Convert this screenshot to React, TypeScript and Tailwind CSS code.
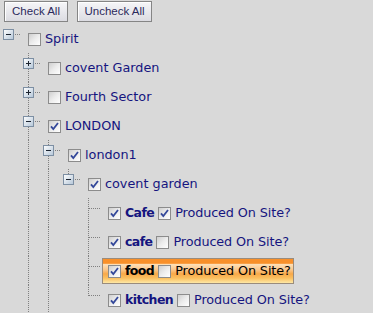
import React from 'react';

type Cell = ' ' | 'I' | 'T' | 'L' | 'R';

type TreeRow = {
  label: string;
  cells: Cell[];
  expander?: 'plus' | 'minus';
  checked: boolean;
  bold?: boolean;
  produced?: boolean; // undefined = no second checkbox
  selected?: boolean;
};

const rows: TreeRow[] = [
  { label: 'Spirit', cells: ['R'], expander: 'minus', checked: false },
  { label: 'covent Garden', cells: [' ', 'T'], expander: 'plus', checked: false },
  { label: 'Fourth Sector', cells: [' ', 'T'], expander: 'plus', checked: false },
  { label: 'LONDON', cells: [' ', 'T'], expander: 'minus', checked: true },
  { label: 'london1', cells: [' ', 'I', 'T'], expander: 'minus', checked: true },
  { label: 'covent garden', cells: [' ', 'I', 'I', 'L'], expander: 'minus', checked: true },
  { label: 'Cafe', cells: [' ', 'I', 'I', ' ', 'T'], checked: true, bold: true, produced: true },
  { label: 'cafe', cells: [' ', 'I', 'I', ' ', 'T'], checked: true, bold: true, produced: false },
  { label: 'food', cells: [' ', 'I', 'I', ' ', 'T'], checked: true, bold: true, produced: false, selected: true },
  { label: 'kitchen', cells: [' ', 'I', 'I', ' ', 'L'], checked: true, bold: true, produced: false },
];

// one 20px indent column of the tree, with its dotted connector lines
function ElbowCell({ type, expander }: { type: Cell; expander?: 'plus' | 'minus' }) {
  const dot = { stroke: '#808080', strokeWidth: 1, strokeDasharray: '1 1', shapeRendering: 'crispEdges' as const };
  return (
    <svg width="20" height="29" className="shrink-0 block">
      <defs>
        <linearGradient id="exp" x1="0" y1="0" x2="1" y2="1">
          <stop offset="0" stopColor="#ffffff" />
          <stop offset="1" stopColor="#b4c6d8" />
        </linearGradient>
      </defs>
      {(type === 'I' || type === 'T') && <line x1="8.5" y1="0" x2="8.5" y2="29" {...dot} />}
      {type === 'L' && <line x1="8.5" y1="0" x2="8.5" y2="11" {...dot} />}
      {(type === 'T' || type === 'L' || type === 'R') && <line x1="9" y1="10.5" x2="20" y2="10.5" {...dot} />}
      {expander && (
        <g shapeRendering="crispEdges">
          <rect x="3.5" y="5.5" width="10" height="10" fill="url(#exp)" stroke="#7d8fa3" />
          <line x1="6" y1="10.5" x2="11" y2="10.5" stroke="#1c2430" />
          {expander === 'plus' && <line x1="8.5" y1="8" x2="8.5" y2="13" stroke="#1c2430" />}
        </g>
      )}
    </svg>
  );
}

function Box({ checked }: { checked: boolean }) {
  return (
    <span className="shrink-0 w-[13px] h-[13px] border border-[#8c8c8c] bg-gradient-to-br from-[#cfcfcf] via-[#ececec] to-[#ffffff] flex items-center justify-center">
      {checked && (
        <svg width="9" height="9" viewBox="0 0 9 9">
          <path d="M1 4.3 L3.3 7 L8 1" fill="none" stroke="#34489a" strokeWidth="1.8" />
        </svg>
      )}
    </span>
  );
}

function Row({ row }: { row: TreeRow }) {
  const textColor = row.selected ? 'text-black' : 'text-[#15157f]';
  return (
    <div className="flex h-[29px]">
      {row.cells.map((c, i) => (
        <ElbowCell key={i} type={c} expander={i === row.cells.length - 1 ? row.expander : undefined} />
      ))}
      <div
        className={`ml-[2px] mt-[2px] h-[26px] flex items-center gap-[4px] pl-[5px] pr-[2px] border ${
          row.selected
            ? 'border-[#9a8c7c] bg-[linear-gradient(to_bottom,#f8902a_0%,#f8902a_18%,#fde0b8_22%,#fbc68a_45%,#f8a848_62%,#fbc060_80%,#fee8a6_100%)]'
            : 'border-transparent'
        }`}
      >
        <Box checked={row.checked} />
        <span className={`${textColor} ${row.bold ? 'font-bold text-[12.5px] tracking-[-0.6px]' : ''} whitespace-nowrap`}>
          {row.label}
        </span>
        {row.produced !== undefined && (
          <>
            <Box checked={row.produced} />
            <span className={`${textColor} whitespace-nowrap tracking-[-0.1px]`}>Produced On Site?</span>
          </>
        )}
      </div>
    </div>
  );
}

export default function App() {
  return (
    <div className="w-[373px] h-[313px] overflow-hidden bg-[#d9d9d9] font-['DejaVu_Sans',sans-serif] text-[12.8px]">
      {/* toolbar */}
      <div className="flex gap-[9px] pl-[4px] pt-[1px]">
        <button className="h-[21px] w-[64px] border border-[#858585] bg-gradient-to-b from-[#f6f6f8] to-[#dcdce2] shadow-[inset_1px_1px_0_#ffffff] text-[11.5px] text-[#2c2a5c] font-['Liberation_Sans',sans-serif]">
          Check All
        </button>
        <button className="h-[21px] w-[75px] border border-[#858585] bg-gradient-to-b from-[#f6f6f8] to-[#dcdce2] shadow-[inset_1px_1px_0_#ffffff] text-[11.5px] text-[#2c2a5c] font-['Liberation_Sans',sans-serif]">
          Uncheck All
        </button>
      </div>

      {/* tree */}
      <div className="mt-[2px]">
        {rows.map((r, i) => (
          <Row key={i} row={r} />
        ))}
      </div>
    </div>
  );
}
